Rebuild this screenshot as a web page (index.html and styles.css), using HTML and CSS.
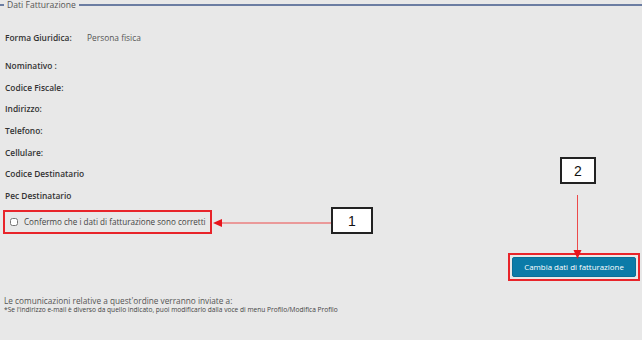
FILE: index.html
```html
<!DOCTYPE html>
<html lang="it">
<head>
  <meta charset="UTF-8">
  <meta name="viewport" content="width=device-width, initial-scale=1.0">
  <title>Dati Fatturazione</title>
  <link rel="stylesheet" href="styles.css">
</head>
<body>
  <fieldset class="billing">
    <legend>Dati Fatturazione</legend>

    <div class="row first">
      <span class="label">Forma Giuridica:</span>
      <span class="value">Persona fisica</span>
    </div>
    <div class="row"><span class="label">Nominativo :</span></div>
    <div class="row"><span class="label">Codice Fiscale:</span></div>
    <div class="row"><span class="label">Indirizzo:</span></div>
    <div class="row"><span class="label">Telefono:</span></div>
    <div class="row"><span class="label">Cellulare:</span></div>
    <div class="row"><span class="label">Codice Destinatario</span></div>
    <div class="row"><span class="label">Pec Destinatario</span></div>

    <label class="confirm">
      <input type="checkbox">
      <span>Confermo che i dati di fatturazione sono corretti</span>
    </label>

    <div class="actions">
      <div class="highlight">
        <button class="btn">Cambia dati di fatturazione</button>
      </div>
    </div>

    <p class="notice">Le comunicazioni relative a quest'ordine verranno inviate a:</p>
    <p class="note">*Se l'indirizzo e-mail è diverso da quello indicato, puoi modificarlo dalla voce di menu Profilo/Modifica Profilo</p>
  </fieldset>

  <!-- annotazioni -->
  <div class="callout callout-1">1</div>
  <div class="callout callout-2">2</div>
  <svg class="arrows" width="642" height="340" viewBox="0 0 642 340">
    <line x1="331" y1="223" x2="221" y2="223" stroke="#ec4a4a" stroke-width="1"/>
    <polygon points="213,223 222,219 222,227" fill="#e8141c"/>
    <line x1="577.5" y1="195" x2="577.5" y2="251" stroke="#ec4a4a" stroke-width="1"/>
    <polygon points="577.5,259 573.5,250 581.5,250" fill="#e8141c"/>
  </svg>
</body>
</html>
```
FILE: styles.css
```css
body {
  margin: 0;
  background: #e8e8e8;
  font-family: "Open Sans", "DejaVu Sans", sans-serif;
  color: #333;
  width: 642px;
  height: 340px;
  position: relative;
  overflow: hidden;
}
.billing {
  margin: 0;
  padding: 0 0 0 5px;
  border: none;
  border-top: 2px solid #6b7da2;
  min-width: 0;
}
.billing legend {
  font-size: 8.6px;
  color: #555;
  padding: 0 3px;
  margin-left: -1px;
  line-height: 10px;
}
.row {
  height: 21.7px;
  display: flex;
  align-items: center;
  font-size: 8.4px;
}
.row.first {
  margin-top: 17px;
  margin-bottom: 6px;
}
.label {
  font-weight: 600;
  color: #333;
  min-width: 82px;
  white-space: nowrap;
}
.value {
  color: #555;
}
.confirm {
  display: inline-flex;
  align-items: center;
  gap: 6px;
  margin: 3px 0 0 -2px;
  padding: 3px 4px 3px 5px;
  border: 2px solid #e8242a;
  font-size: 8.1px;
  color: #444;
  height: 14px;
  white-space: nowrap;
}
.confirm input {
  margin: 0;
  width: 8px;
  height: 8px;
}
.actions {
  display: flex;
  justify-content: flex-end;
  margin-top: 19px;
  padding-right: 2px;
}
.highlight {
  border: 2px solid #e8242a;
  padding: 2px;
}
.btn {
  display: block;
  width: 124px;
  height: 20px;
  background: #0b7ba8;
  color: #fff;
  border: 1px solid #0a6e96;
  border-radius: 2px;
  font-family: inherit;
  font-size: 7.9px;
  padding: 0;
}
.notice {
  margin: 14px 0 0 -1px;
  font-size: 8.25px;
  color: #555;
  line-height: 11px;
}
.note {
  margin: 0 0 0 -1px;
  font-size: 6.6px;
  color: #444;
  line-height: 8px;
  white-space: nowrap;
}
.callout {
  position: absolute;
  background: #fff;
  border: 2px solid #222;
  font-family: "Liberation Sans", Arial, sans-serif;
  font-size: 14px;
  color: #111;
  display: flex;
  align-items: center;
  justify-content: center;
  box-sizing: border-box;
}
.callout-1 {
  left: 331px;
  top: 207px;
  width: 42px;
  height: 27px;
}
.callout-2 {
  left: 560px;
  top: 157px;
  width: 36px;
  height: 27px;
}
.arrows {
  position: absolute;
  left: 0;
  top: 0;
  pointer-events: none;
}
```
